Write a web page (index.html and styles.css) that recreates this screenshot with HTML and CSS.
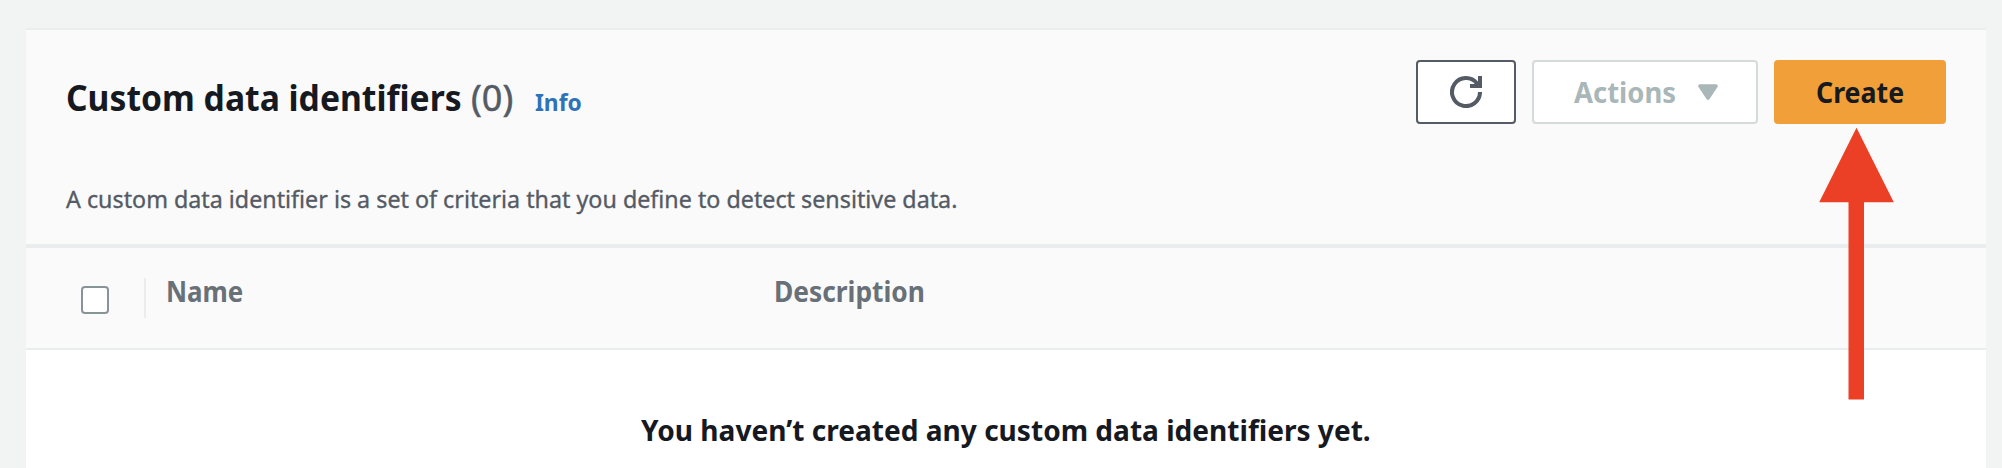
FILE: index.html
```html
<!DOCTYPE html>
<html lang="en">
<head>
<meta charset="utf-8">
<title>Custom data identifiers</title>
<link rel="stylesheet" href="styles.css">
</head>
<body>
<main class="panel">
  <header class="panel-header">
    <div class="header-row">
      <div class="heading">
        <h2 class="title"><span class="fit">Custom data identifiers</span></h2>
        <span class="count">(0)</span>
        <a class="info"><span class="fit">Info</span></a>
      </div>
      <div class="toolbar">
        <button class="btn btn-refresh" aria-label="Refresh">
          <svg width="32" height="32" viewBox="0 0 16 16" fill="none" stroke="currentColor" stroke-width="2"><path d="M10 5h5V0"/><path d="M15 9V8M15 8a7 7 0 1 1-1.5-4.3L14.4 5"/></svg>
        </button>
        <button class="btn btn-actions" disabled>
          <span class="fit">Actions</span>
          <svg width="20" height="16" viewBox="0 0 20 16"><path d="M2 2h16l-8 12z" fill="currentColor" stroke="currentColor" stroke-width="3.6" stroke-linejoin="round"/></svg>
        </button>
        <button class="btn btn-create"><span class="fit">Create</span></button>
      </div>
    </div>
    <p class="summary"><span class="fit">A custom data identifier is a set of criteria that you define to detect sensitive data.</span></p>
  </header>
  <div class="table-head">
    <div class="col-select"><span class="checkbox"></span></div>
    <div class="col-name"><span class="fit">Name</span></div>
    <div class="col-description"><span class="fit">Description</span></div>
  </div>
  <p class="empty"><span class="fit">You haven’t created any custom data identifiers yet.</span></p>
</main>
<svg class="pointer" width="76" height="273" viewBox="0 0 76 273"><path d="M38.5 .8L75.8 75.2H46V272.5H30.5V75.2H1.2z"/></svg>
</body>
</html>
```
FILE: styles.css
```css
* { box-sizing: border-box; }

body {
  margin: 0;
  height: 468px;
  overflow: hidden;
  padding: 28px 16px 0 26px;
  background: #f2f4f4;
  color: #16191f;
  font-family: "Noto Sans", sans-serif;
}

.panel {
  height: 440px;
  background: #fff;
  border-top: 2px solid #eaeded;
}

.panel-header {
  height: 218px;
  padding: 30px 40px 0;
  background: #fafafa;
  border-bottom: 4px solid #e9eded;
}

.header-row {
  display: flex;
  justify-content: space-between;
  height: 123px;
}

.heading {
  display: flex;
  align-items: baseline;
  padding-top: 16px;
  line-height: 44px;
}

/* Narrows the glyphs of a label without changing its height. */
.fit {
  display: inline-block;
  white-space: nowrap;
  transform-origin: left center;
}

.title {
  width: 405px;
  margin: 0;
  font-size: 36px;
  font-weight: 700;
}
.title .fit { transform: scaleX(.935); }

.count {
  width: 64px;
  color: #545b64;
  font-size: 36px;
  -webkit-text-stroke: .5px #545b64;
}

.info {
  color: #2e73b8;
  font-size: 24px;
  font-weight: 700;
}
.info .fit { transform: scaleX(.95); }

.toolbar {
  display: flex;
  gap: 16px;
}

.btn {
  display: flex;
  align-items: center;
  height: 64px;
  padding: 0 0 1px;
  border: 2px solid #545b64;
  border-radius: 4px;
  background: #fff;
  color: #545b64;
  font: 700 28px/36px "Noto Sans", sans-serif;
}

.btn-refresh {
  justify-content: center;
  width: 100px;
  padding: 0;
}

.btn-actions {
  gap: 20px;
  width: 226px;
  padding-left: 40px;
  border-color: #d5dbdb;
  color: #aab7b8;
}
.btn-actions .fit { transform: scaleX(.98); }
.btn-actions svg { margin-top: 1px; }

.btn-create {
  width: 172px;
  padding-left: 40px;
  border-color: #f19f38;
  background: #f19f38;
  color: #16191f;
}
.btn-create .fit { transform: scaleX(.955); }

.summary {
  margin: 0;
  color: #545b64;
  font-size: 24px;
  line-height: 32px;
  -webkit-text-stroke: .35px #545b64;
}
.summary .fit { transform: scaleX(.97); }

.table-head {
  display: flex;
  height: 102px;
  padding-top: 25px;
  background: #fafafa;
  border-bottom: 2px solid #eaeded;
  color: #687078;
  font-size: 28px;
  font-weight: 700;
  line-height: 36px;
}

.col-select {
  width: 120px;
  height: 40px;
  margin-top: 5px;
  padding: 8px 0 0 55px;
  border-right: 2px solid #eaeded;
}

.checkbox {
  display: block;
  width: 28px;
  height: 28px;
  border: 2px solid #879596;
  border-radius: 4px;
  background: #fff;
}

.col-name {
  width: 608px;
  padding-left: 20px;
}
.col-name .fit { transform: scaleX(.925); }

.col-description { padding-left: 20px; }
.col-description .fit { transform: scaleX(.94); }

.empty {
  margin: 60px 0 0;
  text-align: center;
  font-size: 29px;
  font-weight: 700;
  line-height: 40px;
}
.empty .fit {
  transform: scaleX(.968);
  transform-origin: center;
}

/* Callout arrow lying over the panel, aimed at the Create button. */
.pointer {
  position: absolute;
  left: 1818px;
  top: 127px;
  fill: #eb4026;
}
```
